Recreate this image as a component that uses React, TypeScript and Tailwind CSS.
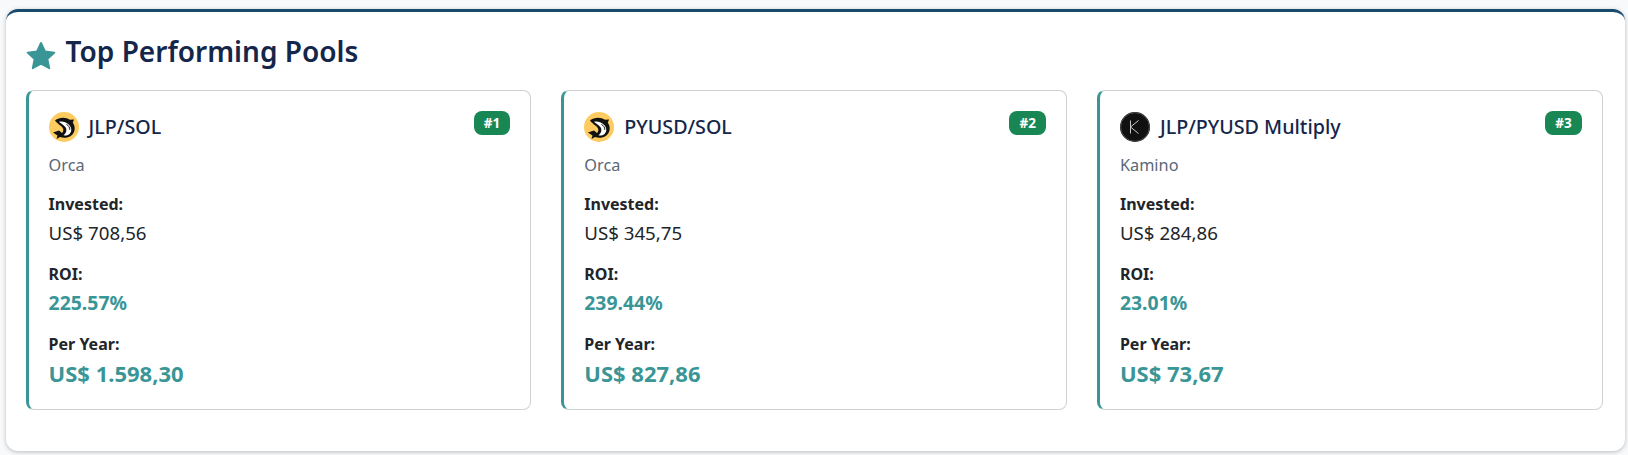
const pools = [
  { name: 'JLP/SOL', platform: 'Orca', rank: '#1', invested: 'US$ 708,56', roi: '225.57%', perYear: 'US$ 1.598,30', logo: 'orca' },
  { name: 'PYUSD/SOL', platform: 'Orca', rank: '#2', invested: 'US$ 345,75', roi: '239.44%', perYear: 'US$ 827,86', logo: 'orca' },
  { name: 'JLP/PYUSD Multiply', platform: 'Kamino', rank: '#3', invested: 'US$ 284,86', roi: '23.01%', perYear: 'US$ 73,67', logo: 'kamino' },
]

const OrcaLogo = () => (
  <svg viewBox="0 0 30 30" className="h-[30px] w-[30px] shrink-0">
    <circle cx="15" cy="15" r="15" fill="#fdcb5f" />
    <path d="M6 8.500C10 5 17 4.800 21 7.800l4-.3-1.200 3.300c3 4 2.500 10-1.800 13-3.500 2.500-8 2.400-11 1.200L7.500 27l1-3.500L4 20.500l6-2 3 2.500c1-1 1.500-2.500 1.200-4C13.500 14 9 12.500 6 8.500Z" fill="#111" />
    <path d="M10 9.800c3.500-.8 8 .5 10.500 3.500 2.500 3 2.300 6.800-.2 8.900-1.700 1.400-4 1.700-5.800 1.100 2-1.300 3.200-3.600 2.800-6.200-.4-3-4.400-4.600-7.300-7.300Z" fill="#fff" />
    <path d="M17.500 12.500c2 1 3.500 3 3.300 5.300" fill="none" stroke="#111" strokeWidth="1" />
  </svg>
)

const KaminoLogo = () => (
  <svg viewBox="0 0 30 30" className="h-[30px] w-[30px] shrink-0">
    <circle cx="15" cy="15" r="15" fill="#111" />
    <circle cx="15" cy="15" r="14.300" fill="none" stroke="#5a5a5a" strokeWidth="0.800" />
    <path d="M10.500 8.500v13M10.500 15l8-6.500M10.500 15l8 6.500" fill="none" stroke="#c9c9c9" strokeWidth="1" />
  </svg>
)

const PoolCard = ({ pool }: { pool: (typeof pools)[number] }) => (
  <div className="h-[320px] rounded-lg border border-l-[3px] border-[#d0d0d0] border-l-[#3a9696] px-5 pt-5">
    <div className="flex items-start justify-between">
      <div className="flex items-center gap-2.5">
        {pool.logo === 'orca' ? <OrcaLogo /> : <KaminoLogo />}
        <span className="mt-px text-[19.700px] font-medium leading-[30px] text-[#14264a]">{pool.name}</span>
      </div>
      <span className="rounded-lg bg-[#198754] px-2.5 py-[3px] text-[13.500px] font-bold leading-[18px] text-white">{pool.rank}</span>
    </div>
    <p className="mt-[11px] text-[16.300px] leading-6 text-[#5b6778]">{pool.platform}</p>
    <p className="mt-[15px] text-[16px] font-bold leading-6 text-[#212529]">Invested:</p>
    <p className="mt-[3px] text-[18.700px] leading-7 text-[#212529]">{pool.invested}</p>
    <p className="mt-[15px] text-[16px] font-bold leading-6 text-[#212529]">ROI:</p>
    <p className="mt-[3px] text-[19.400px] font-bold leading-7 text-[#3a9696]">{pool.roi}</p>
    <p className="mt-[15px] text-[16px] font-bold leading-6 text-[#212529]">Per Year:</p>
    <p className="mt-px text-[22px] font-bold leading-8 text-[#3a9696]">{pool.perYear}</p>
  </div>
)

export default function App() {
  return (
    <div className="min-h-[455px] bg-[#f8f9fa] pb-1 pl-1.5 pr-[3px] pt-[9px] font-['Noto_Sans',sans-serif]">
      <section className="h-[442px] rounded-xl border-t-[3px] border-[#1a4a6e] bg-white pl-[19.600px] pr-[22.400px] pt-5 shadow-[0_1px_4px_rgba(0,0,0,0.25)]">
        <div className="flex h-[58px] items-start gap-2.5">
          <svg viewBox="0 0 24 24" className="mt-[9px] h-[30px] w-[30px] shrink-0" fill="#3a9696">
            <path d="M12 1.500l3.200 6.900 7.500.9-5.600 5.100 1.500 7.400L12 18.100l-6.600 3.700 1.500-7.400L1.300 9.300l7.500-.9L12 1.500Z" stroke="#3a9696" strokeWidth="1.500" strokeLinejoin="round" />
          </svg>
          <h2 className="text-[28px] font-semibold leading-[38px] text-[#14264a]">Top Performing Pools</h2>
        </div>
        <div className="grid grid-cols-3 gap-[30px]">
          {pools.map((pool) => (
            <PoolCard key={pool.rank} pool={pool} />
          ))}
        </div>
      </section>
    </div>
  )
}
